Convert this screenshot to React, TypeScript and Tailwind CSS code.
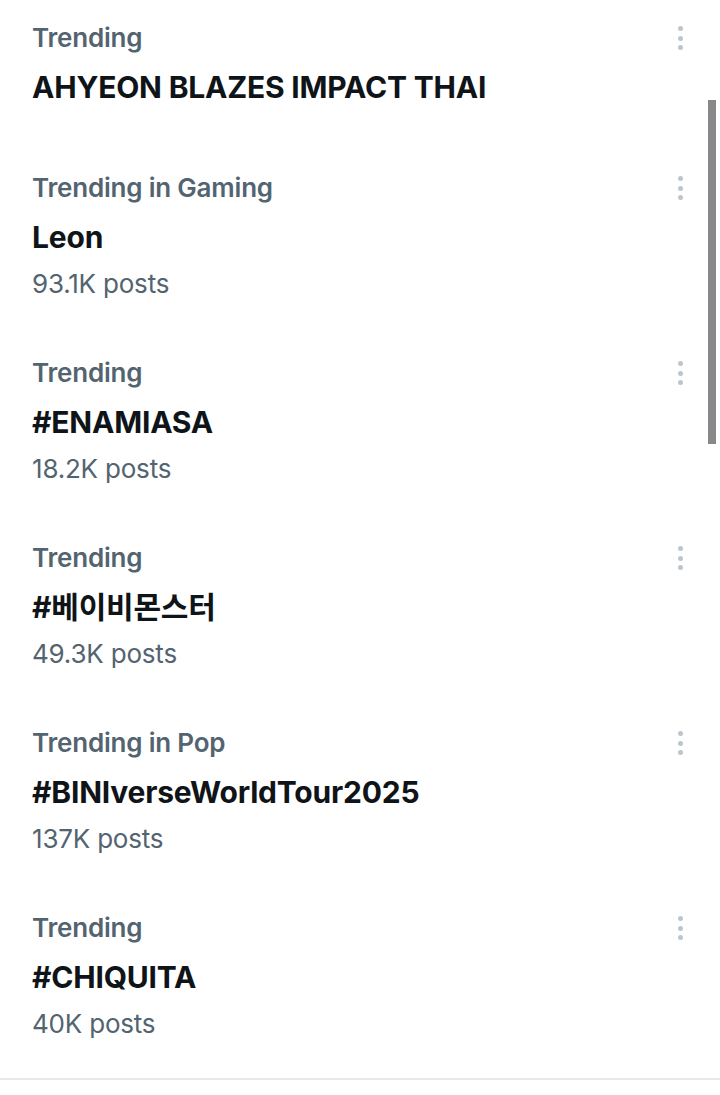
import React from 'react';

interface Trend {
    label: string;
    title: string;
    posts?: string;
}

const trends: Trend[] = [
    { label: 'Trending', title: 'AHYEON BLAZES IMPACT THAI' },
    { label: 'Trending in Gaming', title: 'Leon', posts: '93.1K posts' },
    { label: 'Trending', title: '#ENAMIASA', posts: '18.2K posts' },
    { label: 'Trending', title: '#베이비몬스터', posts: '49.3K posts' },
    { label: 'Trending in Pop', title: '#BINIverseWorldTour2025', posts: '137K posts' },
    { label: 'Trending', title: '#CHIQUITA', posts: '40K posts' },
];

const MoreDots: React.FC = () => (
    <div className="flex flex-col items-center gap-[4.5px] w-[6px]">
        <span className="block w-[5px] h-[5px] rounded-full bg-[#bcc6cd]" />
        <span className="block w-[5px] h-[5px] rounded-full bg-[#bcc6cd]" />
        <span className="block w-[5px] h-[5px] rounded-full bg-[#bcc6cd]" />
    </div>
);

const TrendItem: React.FC<{ trend: Trend; first?: boolean; last?: boolean }> = ({ trend, first, last }) => {
    const pb = first ? 'pb-[32px]' : last ? 'pb-[40px]' : 'pb-[37px]';
    return (
        <div className={`pl-8 pr-[37px] pt-5 ${pb}`}>
            <div className="flex items-center justify-between h-9">
                <span className="text-[26px] font-semibold leading-9 text-[#536471] tracking-[-0.2px]">{trend.label}</span>
                <MoreDots />
            </div>
            <div className="h-[62px] flex items-center text-[30px] font-bold text-[#0f1419] tracking-[-0.2px]">
                {trend.title}
            </div>
            {trend.posts && (
                <div className="h-[30px] flex items-center text-[26px] text-[#536471] tracking-[-0.2px]">
                    {trend.posts}
                </div>
            )}
        </div>
    );
};

const App: React.FC = () => {
    return (
        <div
            className="relative w-[720px] h-[1095px] bg-white overflow-hidden"
            style={{ fontFamily: 'Inter, "Noto Sans CJK KR", sans-serif' }}
        >
            <div className="border-b-2 border-[#e6e9eb]">
                {trends.map((t, i) => (
                    <TrendItem key={i} trend={t} first={i === 0} last={i === trends.length - 1} />
                ))}
            </div>
            {/* overlay scrollbar */}
            <div className="absolute right-[4px] top-[100px] w-[8px] h-[344px] bg-[#88888a]" />
        </div>
    );
};

export default App;
